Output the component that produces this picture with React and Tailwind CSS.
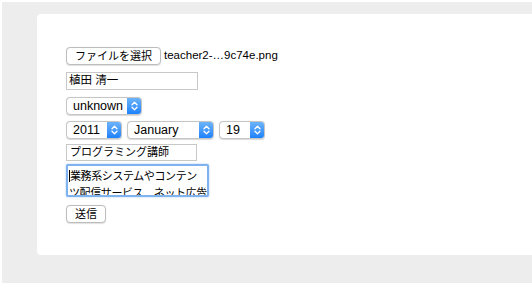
import React from "react";

function Chevrons() {
  return (
    <svg width="7" height="10" viewBox="0 0 7 10" fill="none" stroke="white" strokeWidth="1.3" strokeLinecap="round" strokeLinejoin="round">
      <path d="M1 3.8 L3.5 1.3 L6 3.8" />
      <path d="M1 6.2 L3.5 8.7 L6 6.2" />
    </svg>
  );
}

function Select({ label, width }) {
  return (
    <div
      className="flex h-[18px] items-stretch rounded-[4px] border border-[#c5c5c5] bg-white shadow-[0_0.5px_1px_rgba(0,0,0,0.15)] overflow-hidden"
      style={{ width }}
    >
      <div className="flex flex-1 items-center pl-[6px] text-[12.5px] leading-none text-black" style={{ fontFamily: '"Liberation Sans", Arial, sans-serif' }}>
        {label}
      </div>
      <div className="flex w-[14px] items-center justify-center bg-gradient-to-b from-[#6cb3fa] to-[#1a82fb]">
        <Chevrons />
      </div>
    </div>
  );
}

export default function App() {
  const jp = { fontFamily: '"Liberation Sans", "Noto Sans CJK JP", sans-serif' };
  return (
    <div className="h-[286px] w-[532px] bg-white pl-[2px] pt-[2px] pb-[3px]">
      <div className="h-[281px] bg-[#ededed] pl-[35px] pt-[12px]">
        <div className="h-[241px] rounded-l-[4px] bg-white pl-[29px] pt-[33px]">
          <div className="flex flex-col items-start">
            <div className="flex items-center">
              <div className="flex h-[18px] items-center rounded-[4px] border border-[#bdbdbd] bg-white px-[8px] text-[11px] leading-none text-black shadow-[0_0.5px_1px_rgba(0,0,0,0.12)]" style={jp}>
                ファイルを選択
              </div>
              <span className="ml-[3px] text-[11.5px] text-black" style={{ fontFamily: '"Liberation Sans", Arial, sans-serif' }}>
                teacher2-…9c74e.png
              </span>
            </div>
            <div className="mt-[7px] flex h-[18px] w-[132px] items-center border border-[#c8c8c8] bg-white pl-[2px] text-[11.5px] leading-none text-black" style={jp}>
              植田 清一
            </div>
            <div className="mt-[7px]">
              <Select label="unknown" width={76} />
            </div>
            <div className="mt-[6px] flex gap-[5px]">
              <Select label="2011" width={56} />
              <Select label="January" width={87} />
              <Select label="19" width={46} />
            </div>
            <div className="mt-[5px] flex h-[17px] w-[131px] items-center border border-[#c8c8c8] bg-white pl-[3px] text-[11px] leading-none text-black" style={jp}>
              プログラミング講師
            </div>
            <div className="relative mt-[3px] h-[33px] w-[143px] overflow-hidden whitespace-nowrap rounded-[2px] border-2 border-[#7fb2ee] bg-white pl-[1px] pt-[2px] text-[11px] leading-[17px] tracking-[-0.4px] text-black shadow-[0_0_2px_#9cc5f5]" style={jp}>
              <span className="border-l border-black">業務系システムやコンテン</span>
              <br />
              ツ配信サービス、ネット広告
              <svg className="absolute bottom-[1px] right-[1px]" width="7" height="7" viewBox="0 0 7 7" stroke="#888" strokeWidth="0.8">
                <path d="M6.5 0.5 L0.5 6.5 M6.5 3.5 L3.5 6.5" />
              </svg>
            </div>
            <div className="mt-[8px] flex h-[18px] items-center rounded-[4px] border border-[#bdbdbd] bg-white px-[8px] text-[11px] leading-none text-black shadow-[0_0.5px_1px_rgba(0,0,0,0.12)]" style={jp}>
              送信
            </div>
          </div>
        </div>
      </div>
    </div>
  );
}
